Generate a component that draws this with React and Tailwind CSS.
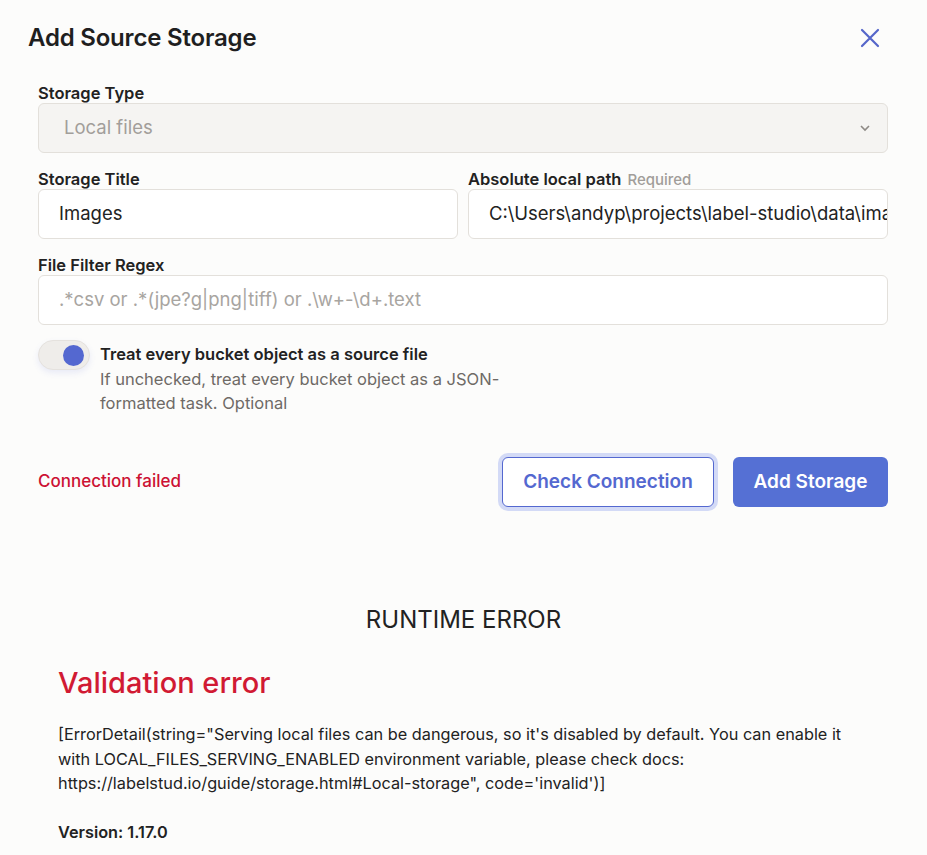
import React from "react";

const font = { fontFamily: "Inter, 'Noto Sans', sans-serif" };

function Label({ children }) {
  return (
    <div className="h-[20px] text-[16.5px] font-semibold text-[#222] leading-[20px] flex items-baseline gap-[6px] whitespace-nowrap overflow-visible">
      {children}
    </div>
  );
}

function Input({ value, placeholder }) {
  return (
    <div className="h-[50px] rounded-[6px] border border-[#e3e0db] bg-white flex items-center px-[20px] overflow-hidden whitespace-nowrap text-[18.5px]">
      {value ? (
        <span className="text-[#222]">{value}</span>
      ) : (
        <span className="text-[#a8a5a1]">{placeholder}</span>
      )}
    </div>
  );
}

export default function App() {
  return (
    <div className="min-h-[855px] w-[927px] bg-[#fcfcfb] text-[#222]" style={font}>
      <div className="flex items-center justify-between pl-[28px] pr-[47px] pt-[23px] h-[52px]">
        <h1 className="text-[24px] font-semibold text-[#1f1f1f] tracking-[-0.2px]">Add Source Storage</h1>
        <svg width="20" height="20" viewBox="0 0 20 20">
          <path d="M2 2 L18 18 M18 2 L2 18" stroke="#5566c9" strokeWidth="2.2" strokeLinecap="round" />
        </svg>
      </div>

      <div className="pl-[38px] pr-[39px] pt-[31px]">
        <Label>Storage Type</Label>
        <div className="h-[50px] rounded-[6px] border border-[#e3e0db] bg-[#f5f4f2] flex items-center justify-between pl-[25px] pr-[16px]">
          <span className="text-[18.5px] text-[#a29e9a]">Local files</span>
          <svg width="12" height="8" viewBox="0 0 12 8">
            <path d="M2 2 L6 6 L10 2" stroke="#8e8a86" strokeWidth="1.6" fill="none" />
          </svg>
        </div>

        <div className="grid grid-cols-2 gap-[10px] mt-[16px]">
          <div>
            <Label>Storage Title</Label>
            <Input value="Images" />
          </div>
          <div>
            <Label>
              Absolute local path
              <span className="text-[15px] font-medium text-[#a19d99]">Required</span>
            </Label>
            <Input value="C:\Users\andyp\projects\label-studio\data\images" />
          </div>
        </div>

        <div className="mt-[16px]">
          <Label>File Filter Regex</Label>
          <Input placeholder=".*csv or .*(jpe?g|png|tiff) or .\w+-\d+.text" />
        </div>

        <div className="flex gap-[10px] mt-[15px]">
          <div className="w-[52px] h-[30px] rounded-full bg-[#efedea] border border-[#e5e2de] shadow-[0_3px_6px_rgba(90,110,210,0.12)] flex items-center justify-end pr-[5px] shrink-0">
            <div className="w-[21px] h-[21px] rounded-full bg-[#5468d0]" />
          </div>
          <div className="pt-[4px]">
            <div className="text-[16.5px] font-semibold text-[#222] leading-[20px]">Treat every bucket object as a source file</div>
            <div className="text-[16.5px] text-[#6e6a66] leading-[24px] mt-[3px] w-[420px]">
              If unchecked, treat every bucket object as a JSON-formatted task. Optional
            </div>
          </div>
        </div>

        <div className="flex items-center justify-between mt-[38px]">
          <span className="text-[17px] font-medium text-[#cc1133]">Connection failed</span>
          <div className="flex items-center gap-[15px]">
            <div className="rounded-[10px] p-[4px] bg-[#d3daf6]">
              <button className="h-[50px] w-[212px] rounded-[6px] border border-[#5468d0] bg-white text-[19px] font-semibold text-[#5468d0]">
                Check Connection
              </button>
            </div>
            <button className="h-[50px] w-[155px] rounded-[6px] bg-[#5570d4] text-[19px] font-semibold text-white">
              Add Storage
            </button>
          </div>
        </div>
      </div>

      <div className="mt-[95px] text-center text-[24px] text-[#222] leading-[28px]">RUNTIME ERROR</div>

      <div className="pl-[58px] pr-[60px] mt-[29px]">
        <div className="text-[29px] font-medium text-[#d11a33] leading-[40px]">Validation error</div>
        <div className="mt-[19px] text-[16.3px] leading-[24.5px] text-[#222] w-[800px]">
          [ErrorDetail(string="Serving local files can be dangerous, so it's disabled by default. You can enable it with LOCAL_FILES_SERVING_ENABLED environment variable, please check docs: https://labelstud.io/guide/storage.html#Local-storage", code='invalid')]
        </div>
        <div className="mt-[24px] text-[16.3px] font-semibold text-[#222]">Version: 1.17.0</div>
      </div>
    </div>
  );
}
